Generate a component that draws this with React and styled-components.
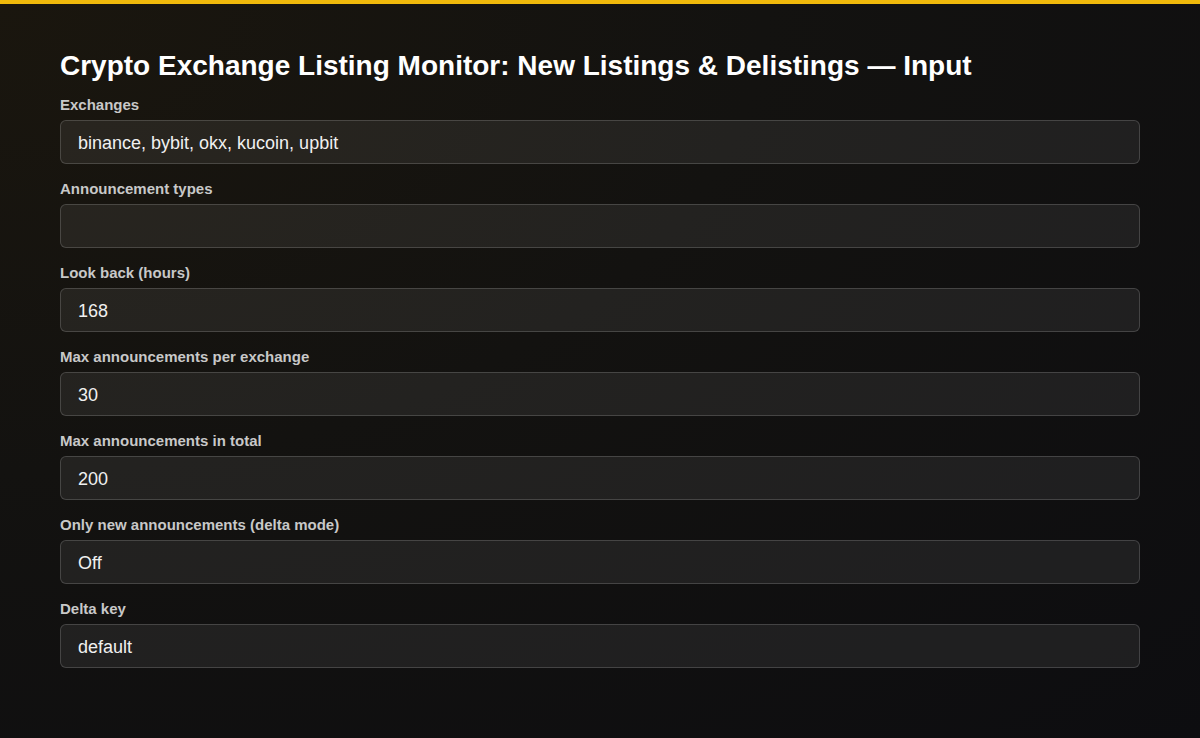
import React from "react";
import styled, { createGlobalStyle } from "styled-components";

const GlobalStyle = createGlobalStyle`
  html, body {
    margin: 0;
    padding: 0;
    background: #0d0d10;
  }
  * {
    box-sizing: border-box;
  }
`;

const fields = [
  { label: "Exchanges", value: "binance, bybit, okx, kucoin, upbit" },
  { label: "Announcement types", value: "" },
  { label: "Look back (hours)", value: "168" },
  { label: "Max announcements per exchange", value: "30" },
  { label: "Max announcements in total", value: "200" },
  { label: "Only new announcements (delta mode)", value: "Off" },
  { label: "Delta key", value: "default" },
];

const App = () => {
  return (
    <>
      <GlobalStyle />
      <Page>
        <Content>
          <Title>Crypto Exchange Listing Monitor: New Listings &amp; Delistings — Input</Title>
          {fields.map((f) => (
            <Field key={f.label}>
              <Label>{f.label}</Label>
              <Input type="text" value={f.value} readOnly />
            </Field>
          ))}
        </Content>
      </Page>
    </>
  );
};

export default App;

const Page = styled.div`
  min-height: 738px;
  border-top: 4px solid #f0b90b;
  background: radial-gradient(
      ellipse at 0% 0%,
      #1a160e 0%,
      #131210 45%,
      #0d0d10 100%
    );
  font-family: "Liberation Sans", Arial, sans-serif;
`;

const Content = styled.div`
  padding: 46px 60px 40px;
  display: flex;
  flex-direction: column;
`;

const Title = styled.h1`
  margin: 0 0 15px;
  font-size: 28px;
  line-height: 32px;
  font-weight: 700;
  color: #ffffff;
`;

const Field = styled.div`
  display: flex;
  flex-direction: column;
  margin-bottom: 17px;
`;

const Label = styled.label`
  font-size: 15px;
  line-height: 16px;
  font-weight: 700;
  color: #c8c8c8;
  margin-bottom: 7px;
`;

const Input = styled.input`
  height: 44px;
  width: 100%;
  padding: 3px 17px 0;
  border: 1px solid rgba(255, 255, 255, 0.16);
  border-radius: 6px;
  background: rgba(255, 255, 255, 0.07);
  color: #f0f0f0;
  font-family: "Liberation Sans", Arial, sans-serif;
  font-size: 18px;
  outline: none;
`;
